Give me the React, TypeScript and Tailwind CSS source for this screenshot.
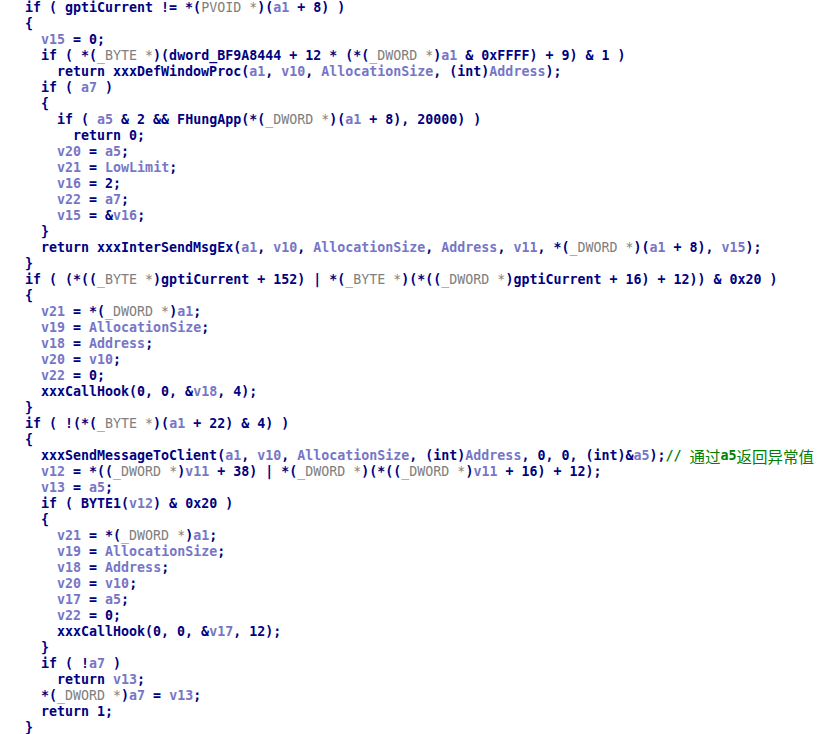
import React from "react";

const code = `if ( gptiCurrent != *(PVOID *)(a1 + 8) )
{
  v15 = 0;
  if ( *(_BYTE *)(dword_BF9A8444 + 12 * (*(_DWORD *)a1 & 0xFFFF) + 9) & 1 )
    return xxxDefWindowProc(a1, v10, AllocationSize, (int)Address);
  if ( a7 )
  {
    if ( a5 & 2 && FHungApp(*(_DWORD *)(a1 + 8), 20000) )
      return 0;
    v20 = a5;
    v21 = LowLimit;
    v16 = 2;
    v22 = a7;
    v15 = &v16;
  }
  return xxxInterSendMsgEx(a1, v10, AllocationSize, Address, v11, *(_DWORD *)(a1 + 8), v15);
}
if ( (*((_BYTE *)gptiCurrent + 152) | *(_BYTE *)(*((_DWORD *)gptiCurrent + 16) + 12)) & 0x20 )
{
  v21 = *(_DWORD *)a1;
  v19 = AllocationSize;
  v18 = Address;
  v20 = v10;
  v22 = 0;
  xxxCallHook(0, 0, &v18, 4);
}
if ( !(*(_BYTE *)(a1 + 22) & 4) )
{
  xxxSendMessageToClient(a1, v10, AllocationSize, (int)Address, 0, 0, (int)&a5);// 通过a5返回异常值
  v12 = *((_DWORD *)v11 + 38) | *(_DWORD *)(*((_DWORD *)v11 + 16) + 12);
  v13 = a5;
  if ( BYTE1(v12) & 0x20 )
  {
    v21 = *(_DWORD *)a1;
    v19 = AllocationSize;
    v18 = Address;
    v20 = v10;
    v17 = a5;
    v22 = 0;
    xxxCallHook(0, 0, &v17, 12);
  }
  if ( !a7 )
    return v13;
  *(_DWORD *)a7 = v13;
  return 1;
}`.split("\n");

const tokenRe = /(\/\/.*$)|(_BYTE \*|_DWORD \*|PVOID \*)|\b([va]\d+|LowLimit|AllocationSize|Address)\b/g;

// comment text: ascii in the mono font, CJK a bit larger so each glyph is 2 cells wide
function Comment({ text }: { text: string }) {
  const parts = text.split(/([\u4e00-\u9fff]+)/);
  return (
    <span className="text-[#008000]">
      {parts.map((p, i) =>
        /[\u4e00-\u9fff]/.test(p) ? (
          <span
            key={i}
            className="inline-block h-4 align-top font-normal text-[15.5px] leading-4 font-['Noto_Sans_CJK_SC',sans-serif]"
          >
            {p}
          </span>
        ) : (
          <span key={i}>{p}</span>
        )
      )}
    </span>
  );
}

function Line({ text }: { text: string }) {
  const out: React.ReactNode[] = [];
  let last = 0;
  let m: RegExpExecArray | null;
  tokenRe.lastIndex = 0;
  while ((m = tokenRe.exec(text))) {
    if (m.index > last) out.push(<span key={last}>{text.slice(last, m.index)}</span>);
    if (m[1]) out.push(<Comment key={m.index} text={m[1]} />);
    else if (m[2]) out.push(<span key={m.index} className="text-[#808080] font-normal">{m[2]}</span>);
    else out.push(<span key={m.index} className="text-[#7676c6]">{m[3]}</span>);
    last = m.index + m[0].length;
  }
  if (last < text.length) out.push(<span key={last}>{text.slice(last)}</span>);
  return <div className="h-4 leading-4 whitespace-pre">{out.length ? out : " "}</div>;
}

export default function App() {
  return (
    <div className="w-[833px] h-[734px] bg-white overflow-hidden">
      <div className="pl-[25px] font-['DejaVu_Sans_Mono',monospace] text-[13.3px] font-bold text-[#000080]">
        {code.map((l, i) => (
          <Line key={i} text={l} />
        ))}
      </div>
    </div>
  );
}
